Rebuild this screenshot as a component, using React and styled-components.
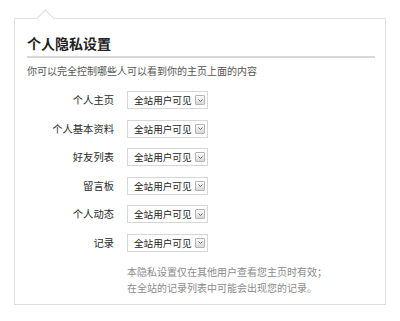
import React from 'react';
import styled, { createGlobalStyle } from 'styled-components';

const rows = ['个人主页', '个人基本资料', '好友列表', '留言板', '个人动态', '记录'];

export default function App() {
  return (
    <>
      <GlobalStyle />
      <Card>
        <Title>个人隐私设置</Title>
        <Intro>你可以完全控制哪些人可以看到你的主页上面的内容</Intro>
        <Form>
          {rows.map((label) => (
            <React.Fragment key={label}>
              <Label>{label}</Label>
              <Select>
                <span>全站用户可见</span>
                <ArrowButton>
                  <svg width="5" height="3" viewBox="0 0 5 3">
                    <path d="M0.5 0.5 L2.5 2.5 L4.5 0.5" fill="none" stroke="#666" strokeWidth="1" />
                  </svg>
                </ArrowButton>
              </Select>
            </React.Fragment>
          ))}
        </Form>
        <Note>
          本隐私设置仅在其他用户查看您主页时有效；
          <br />
          在全站的记录列表中可能会出现您的记录。
        </Note>
      </Card>
    </>
  );
}

const GlobalStyle = createGlobalStyle`
  body {
    margin: 0;
    background: #ffffff;
    font-family: "Noto Sans CJK SC", "Noto Sans", sans-serif;
  }
`;

const Card = styled.div`
  position: relative;
  box-sizing: border-box;
  margin: 18px 0 0 14px;
  width: 372px;
  height: 287px;
  padding: 14px 10px 0 12px;
  border: 1px solid #dddddd;
  background: #ffffff;

  &::before {
    content: '';
    position: absolute;
    top: -7px;
    left: 24px;
    width: 12px;
    height: 12px;
    background: #ffffff;
    border-top: 1px solid #dddddd;
    border-left: 1px solid #dddddd;
    transform: rotate(45deg);
  }
`;

const Title = styled.h2`
  margin: 0;
  padding-bottom: 3px;
  border-bottom: 2px solid #d8d8d8;
  font-size: 14px;
  line-height: 20px;
  font-weight: bold;
  color: #222222;
`;

const Intro = styled.p`
  margin: 5px 0 0;
  font-size: 10px;
  line-height: 16px;
  color: #555555;
`;

const Form = styled.div`
  display: grid;
  grid-template-columns: 87px 81px;
  column-gap: 13px;
  row-gap: 10.6px;
  margin-top: 12px;
`;

const Label = styled.div`
  text-align: right;
  font-size: 10.3px;
  line-height: 18px;
  color: #2a2a2a;
`;

const Select = styled.div`
  box-sizing: border-box;
  display: flex;
  align-items: center;
  justify-content: space-between;
  height: 18px;
  padding: 0 2px 0 6px;
  border: 1px solid #d6d6d6;
  font-size: 9.6px;
  color: #222222;
  white-space: nowrap;
`;

const ArrowButton = styled.div`
  box-sizing: border-box;
  display: flex;
  align-items: center;
  justify-content: center;
  flex: none;
  width: 10px;
  height: 10px;
  border: 1px solid #b4b4b4;
  border-radius: 1px;
  background: linear-gradient(#fbfbfb, #d8d8d8);
`;

const Note = styled.p`
  margin: 12px 0 0 100px;
  font-size: 10px;
  line-height: 16px;
  color: #8a8a8a;
`;
